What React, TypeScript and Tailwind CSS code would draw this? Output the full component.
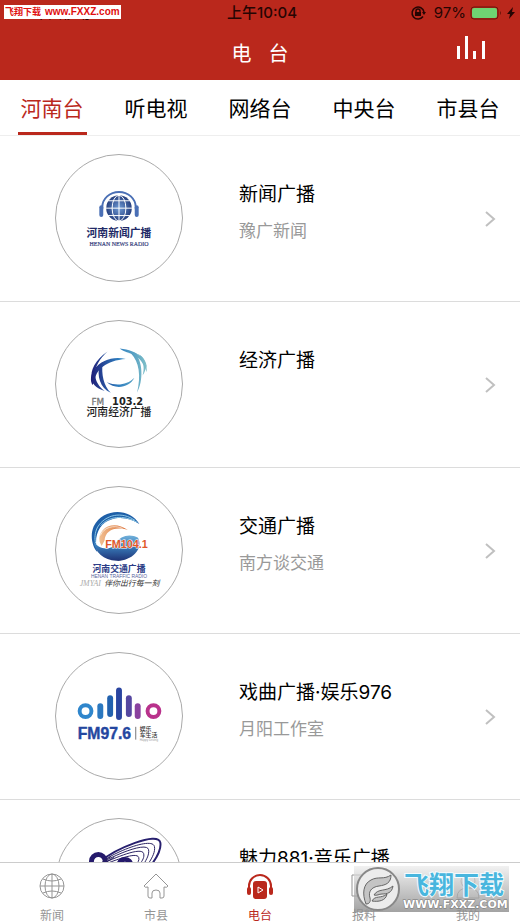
import React from "react";

interface Station {
    id: number,
    title: string,
    subtitle?: string,
    logo: React.ReactNode
}

interface NavItem {
    label: string,
    icon: React.ReactNode
}

const NewsLogo = () => (
    <svg viewBox="0 0 128 128" className="w-full h-full" textAnchor="middle">
        <defs>
            <radialGradient id="globe">
                <stop offset="0" stopColor="#6f9bd6" />
                <stop offset="1" stopColor="#27407f" />
            </radialGradient>
        </defs>
        <circle cx="64" cy="54" r="13" fill="url(#globe)" />
        <g fill="none" stroke="#fff" strokeWidth="1">
            <path d="M64 40v28M50 54h28M53 46.500h22M53 61.500h22" />
            <ellipse cx="64" cy="54" rx="7" ry="13" />
        </g>
        <path d="M47 55v-2a17 15.500 0 0 1 34 0v2" fill="none" stroke="#4a6fb5" strokeWidth="2" />
        <rect x="44" y="51" width="4" height="12" rx="2" fill="#4a6fb5" />
        <rect x="80" y="51" width="4" height="12" rx="2" fill="#4a6fb5" />
        <text x="64" y="83" fontSize="11" fontWeight="700" fill="#222a66">河南新闻广播</text>
        <text x="64" y="92" fontSize="6" fill="#36407c" stroke="#36407c" strokeWidth="0.2" fontFamily="Liberation Serif, serif">HENAN NEWS RADIO</text>
    </svg>
)

const EconomyLogo = () => (
    <svg viewBox="0 0 128 128" className="w-full h-full">
        <defs>
            <linearGradient id="swirl" x1="120" x2="292" y1="0" y2="0" gradientUnits="userSpaceOnUse">
                <stop offset="0" stopColor="#1f1d78" />
                <stop offset="0.500" stopColor="#2f7fc0" />
                <stop offset="1" stopColor="#7fc0c8" />
            </linearGradient>
        </defs>
        <g transform="translate(-5 -5) scale(0.3333)" fill="url(#swirl)">
            <path d="M228 131C190 121 151 136 134 160C119 179 119 198 126 210L134 198C133 166 169 135 228 131Z" />
            <path d="M172 108C134 134 119 166 124 190L131 180C135 155 148 129 172 108Z" />
            <path d="M148 148C139 181 149 219 182 234C160 211 153 180 157 140Z" />
            <path d="M124 182C121 205 137 221 163 228C145 213 137 201 134 180Z" />
            <path d="M170 202C195 225 239 219 254 188C232 210 201 214 170 202Z" />
            <path d="M209 99C238 120 269 107 292 171C294 133 266 105 209 99Z" />
            <path d="M230 116C262 104 278 121 292 158C292 134 270 101 230 116Z" />
            <path d="M244 114C268 140 275 180 262 234C282 196 280 137 255 112Z" />
            <path d="M266 124C284 140 285 160 279 181C295 158 291 138 272 120Z" />
        </g>
        <text x="36" y="85" fontSize="9" fill="#777" stroke="#777" strokeWidth="0.3" fontFamily="DejaVu Sans, sans-serif">FM</text>
        <text x="57" y="85" fontSize="10" fontWeight="700" fill="#222" fontFamily="DejaVu Sans, sans-serif">103.2</text>
        <text x="31" y="97" fontSize="11" fontWeight="500" fill="#222">河南经济广播</text>
    </svg>
)

const TrafficLogo = () => (
    <svg viewBox="0 0 128 128" className="w-full h-full">
        <defs>
            <linearGradient id="ball" x1="0" x2="0" y1="150" y2="245" gradientUnits="userSpaceOnUse">
                <stop offset="0" stopColor="#8ec9e8" />
                <stop offset="0.500" stopColor="#3a7fbd" />
                <stop offset="1" stopColor="#1d2f72" />
            </linearGradient>
            <linearGradient id="flame" x1="140" x2="235" y1="0" y2="0" gradientUnits="userSpaceOnUse">
                <stop offset="0" stopColor="#f3c79b" />
                <stop offset="1" stopColor="#d9682a" />
            </linearGradient>
        </defs>
        <g transform="translate(-5 -6) scale(0.3333)">
            <path d="M269 131C239 80 158 82 130 138C117 168 127 202 141 216C128 165 148 128 184 117C212 107 243 114 269 131Z" fill="#1e5fa8" />
            <path d="M256 120C216 91 165 102 142 140C133 156 132 176 136 190M263 126C220 101 174 108 151 136" fill="none" stroke="#8ec9e8" strokeWidth="3" />
            <path d="M130 184C147 211 183 211 197 190C211 165 242 159 265 173C284 211 239 246 199 243C160 240 134 218 130 184Z" fill="url(#ball)" />
            <path d="M148 185C140 145 188 115 234 149C194 137 165 151 163 181L154 198Z" fill="url(#flame)" />
            <path d="M150 166C161 140 190 133 218 144" fill="none" stroke="#fff" strokeWidth="2" />
        </g>
        <text x="50" y="62" fontSize="11" fontWeight="700" fill="#e0582a" stroke="#fff" strokeWidth="1" paintOrder="stroke" fontFamily="Liberation Sans, sans-serif">FM104.1</text>
        <text x="64" y="86" textAnchor="middle" fontSize="9" fontWeight="700" fill="#2b3c86">河南交通广播</text>
        <text x="64" y="92" textAnchor="middle" fontSize="5" fill="#59639c" fontFamily="Liberation Sans, sans-serif">HENAN TRAFFIC RADIO</text>
        <text x="24" y="101" fontSize="8" fontStyle="italic" fill="#aaa" fontFamily="Liberation Serif, serif">JMYAI</text>
        <text x="49" y="101" fontSize="8" fontStyle="italic" fill="#333">伴你出行每一刻</text>
    </svg>
)

const OperaLogo = () => (
    <svg viewBox="0 0 128 128" className="w-full h-full">
        <g fill="none" strokeWidth="4">
            <circle cx="30" cy="59" r="6" stroke="#2f86cc" />
            <circle cx="99" cy="59" r="6" stroke="#b9328c" />
        </g>
        <g strokeWidth="6" strokeLinecap="round">
            <path d="M45 54v10" stroke="#2b78c0" />
            <path d="M55 46v16" stroke="#2261ae" />
            <path d="M64 38v27" stroke="#2a45a0" />
            <path d="M74 46v16" stroke="#5547a0" />
            <path d="M83 54v10" stroke="#8a429f" />
        </g>
        <text x="22" y="87" fontSize="16" fontWeight="700" fill="#24479f" stroke="#24479f" strokeWidth="0.4" fontFamily="Liberation Sans, sans-serif">FM97.6</text>
        <path d="M81 75v13" stroke="#777" strokeWidth="1" />
        <text x="85" y="79" fontSize="6" fontWeight="500" fill="#333">娱乐</text>
        <text x="85" y="85" fontSize="6" fontWeight="500" fill="#333">车生活</text>
        <text x="85" y="89" fontSize="3" fill="#999" fontFamily="Liberation Sans, sans-serif">Happy Driving</text>
    </svg>
)

const MusicLogo = () => (
    <svg viewBox="0 0 128 128" className="w-full h-full">
        <g fill="none" stroke="#28205f">
            <path d="M44 44C60 30 104 12 106 24C107 30 103 38 98 45" strokeWidth="2" stroke="#28206f" />
            <path d="M44 45C60 33 98 18 100 28C101 33 98 39 94 45" strokeWidth="1" />
            <path d="M44 46C60 36 92 23 94 31C95 36 92 41 89 46" strokeWidth="1" />
            <path d="M44 47C60 39 87 28 89 35C90 39 88 42 85 46" strokeWidth="1" />
            <path d="M44 48C60 42 82 33 84 39C85 42 83 44 81 47" strokeWidth="1" />
            <circle cx="43" cy="43" r="7" fill="#fff" strokeWidth="5" stroke="#251a6b" />
            <circle cx="70" cy="47" r="6" fill="#fff" strokeWidth="5" stroke="#251a6b" />
            <path d="M42 47l14-9M45 47l14-8" strokeWidth="1" />
        </g>
    </svg>
)

const stations: Station[] = [
    { id: 1, title: "新闻广播", subtitle: "豫广新闻", logo: <NewsLogo /> },
    { id: 2, title: "经济广播", logo: <EconomyLogo /> },
    { id: 3, title: "交通广播", subtitle: "南方谈交通", logo: <TrafficLogo /> },
    { id: 4, title: "戏曲广播·娱乐976", subtitle: "月阳工作室", logo: <OperaLogo /> },
    { id: 5, title: "魅力881·音乐广播", logo: <MusicLogo /> },
]

const tabs = ["河南台", "听电视", "网络台", "中央台", "市县台"]

const navItems: NavItem[] = [
    {
        label: "新闻",
        icon: <>
            <circle cx="13" cy="13" r="12" />
            <ellipse cx="13" cy="13" rx="7" ry="12" />
            <path d="M13 1v24M1 13h24M4 6q9 4 18 0M4 20q9-4 18 0" />
        </>
    },
    {
        label: "市县",
        icon: <path d="M1 13L13 1l12 12q-1 2-4 1v9q0 2-2 2h-2v-5q0-3-4-3t-4 3v5H7q-2 0-2-2v-9q-3 1-4-1z" strokeLinejoin="round" />
    },
    {
        label: "电台",
        icon: <>
            <path d="M2 15v-2a11 11 0 0 1 22 0v2" strokeWidth="2" />
            <rect x="0" y="14" width="4" height="8" rx="2" fill="currentColor" stroke="none" />
            <rect x="22" y="14" width="4" height="8" rx="2" fill="currentColor" stroke="none" />
            <rect x="6" y="8" width="14" height="18" rx="3" fill="currentColor" stroke="none" />
            <path d="M11 14l5 3-5 3z" stroke="#fff" />
        </>
    },
    {
        label: "报料",
        icon: <path d="M22 12v11H1V2h15M8 16L22 2" />
    },
    {
        label: "我的",
        icon: <>
            <circle cx="13" cy="8" r="7" />
            <path d="M2 25q0-10 11-10t11 10z" />
        </>
    },
]

const StatusBar = () => (
    <div className="relative grid grid-cols-3 items-center h-[26px] text-[15px] leading-5 text-[#260503]">
        <span className="pl-[34px] text-[14px]">中国移动</span>
        <span className="pl-1 text-center font-medium">上午10:04</span>
        <div className="flex items-center justify-end gap-1 pr-1">
            <svg viewBox="0 0 16 16" className="w-4 h-4 mr-1" fill="none" stroke="currentColor" strokeWidth="1.500">
                <path d="M13 11.500A6 6 0 1 1 14 7" />
                <path d="M12 7h4l-2 3z" fill="currentColor" stroke="none" />
                <rect x="5" y="7" width="6" height="4" fill="currentColor" stroke="none" />
                <path d="M6 7.500V6a2 2 0 0 1 4 0v1.500" />
            </svg>
            <span>97%</span>
            <svg viewBox="0 0 32 14" className="w-8 h-[14px]">
                <rect x="1" y="1" width="27" height="12" rx="3" fill="#b0281b" stroke="#6d140b" strokeWidth="1" />
                <rect x="2" y="2" width="25" height="10" rx="2" fill="#6fd472" />
                <path d="M30 5v4q2-2 0-4z" fill="#6d140b" />
            </svg>
            <svg viewBox="0 0 10 14" className="w-[10px] h-[14px]" fill="currentColor">
                <path d="M7 1L1 8h3l-1 5 6-7H6z" />
            </svg>
        </div>
        <div className="absolute left-1 top-[5px] flex items-center gap-1 h-[14px] px-px bg-white text-[#e01010] font-bold whitespace-nowrap">
            <span className="text-[9px]">飞翔下载</span>
            <span className="text-[10px] font-['Liberation_Sans',sans-serif]">www.FXXZ.com</span>
        </div>
    </div>
)

const Watermark = () => (
    <div className="absolute right-[11px] top-[3px] flex items-center w-[155px] h-[46px] bg-linear-to-b from-[#ececec]/70 to-[#8c8c8c]/80">
        <svg viewBox="0 0 155 46" className="w-full h-full">
            <circle cx="24" cy="23" r="21" fill="#ececec" stroke="#888" strokeWidth="2" />
            <g fill="#c4c4c4" stroke="#666" strokeWidth="1">
                <path d="M12 38C8 28 9 18 17 14C24 10 30 14 37 9C37 17 32 19 25 20C17 21 14 26 16 32C17 36 15 38 12 38Z" />
                <path d="M20 29C24 22 32 26 39 20C38 27 33 28 28 28C25 28 23 30 20 29Z" />
                <path d="M18 35C21 29 27 33 33 28C32 35 24 36 18 35Z" />
            </g>
            <text x="50" y="28" fontSize="25" fontWeight="700" fill="#48b6de" stroke="#f2fcff" strokeWidth="2" paintOrder="stroke">飞翔下载</text>
            <text x="49" y="42" fontSize="11" fontWeight="700" fill="#fff" stroke="#777" strokeWidth="1" paintOrder="stroke" fontFamily="DejaVu Sans, sans-serif">WWW.FXXZ.COM</text>
        </svg>
    </div>
)

const StationRow = ({ title, subtitle, logo }: Omit<Station, "id">) => (
    <li className="border-b border-[#dcdcdc]">
        <button className="flex w-full h-[165px] pl-[55px] pr-6 text-left">
            <span className="shrink-0 mt-[18px] w-32 h-32 rounded-full border border-[#aaa] overflow-hidden">
                {logo}
            </span>
            <span className="flex-1 pl-14 pt-[45px]">
                <span className="block text-[19px] leading-7 text-black">{title}</span>
                {subtitle && <span className="block mt-[10px] text-[17px] leading-6 text-[#999]">{subtitle}</span>}
            </span>
            <svg viewBox="0 0 12 18" className="self-center w-3 h-[18px]" fill="none" stroke="#c0c0c0" strokeWidth="2">
                <path d="M2 2l8 7-8 7" />
            </svg>
        </button>
    </li>
)

export const App = () => {
    return (
        <div className="flex flex-col h-screen overflow-hidden bg-white font-['Inter','Noto_Sans_CJK_SC',sans-serif]">
            <header className="shrink-0 bg-[#ba281c]">
                <StatusBar />
                <div className="grid grid-cols-3 items-center h-[54px] pr-[34px] pl-[34px]">
                    <h1 className="col-start-2 pt-0.5 text-center text-[20px] leading-6 text-white whitespace-pre">电   台</h1>
                    <button aria-label="播放" className="justify-self-end self-start pt-[10px]">
                        <svg viewBox="0 0 30 24" className="w-[30px] h-6" fill="#fff">
                            <rect x="1" y="10" width="3" height="13" />
                            <rect x="9" y="0" width="3" height="23" />
                            <rect x="17" y="15" width="3" height="8" />
                            <rect x="26" y="5" width="3" height="18" />
                        </svg>
                    </button>
                </div>
            </header>
            <nav className="shrink-0 grid grid-cols-5 h-14 border-b border-[#eee]">
                {tabs.map((tab, i) => (
                    <button key={tab} className={i === 0 ? "flex justify-center text-[#ba281c]" : "flex justify-center text-black"}>
                        <span className={i === 0
                            ? "h-full px-[3px] pt-[15px] text-[21px] leading-7 border-b-3 border-[#ba281c]"
                            : "pt-[15px] text-[21px] leading-7"}>
                            {tab}
                        </span>
                    </button>
                ))}
            </nav>
            <main className="flex-1 min-h-0 overflow-hidden">
                <ul>
                    {stations.map(({ id, ...station }) => <StationRow key={id} {...station} />)}
                </ul>
            </main>
            <footer className="relative shrink-0 border-t border-[#ccc] bg-white">
                <nav className="grid grid-cols-5 h-[61px]">
                    {navItems.map(({ label, icon }) => (
                        <button key={label} className={label === "电台"
                            ? "flex flex-col items-center pt-[10px] text-[#ba281c]"
                            : "flex flex-col items-center pt-[10px] text-[#959595]"}>
                            <svg viewBox="0 0 26 26" className="w-[26px] h-[26px]" fill="none" stroke="currentColor" strokeWidth="1">
                                {icon}
                            </svg>
                            <span className="mt-[9px] text-[12px] leading-4">{label}</span>
                        </button>
                    ))}
                </nav>
                <Watermark />
            </footer>
        </div>
    )
}

export default App
